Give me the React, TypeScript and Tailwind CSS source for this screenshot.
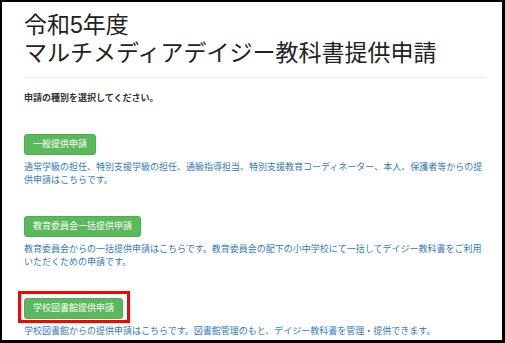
// 申請種別の選択ページ

interface ApplyItem {
  label: string
  description: string
  highlighted?: boolean
}

const items: ApplyItem[] = [
  {
    label: '一般提供申請',
    description:
      '通常学級の担任、特別支援学級の担任、通級指導担当、特別支援教育コーディネーター、本人、保護者等からの提供申請はこちらです。',
  },
  {
    label: '教育委員会一括提供申請',
    description:
      '教育委員会からの一括提供申請はこちらです。教育委員会の配下の小中学校にて一括してデイジー教科書をご利用いただくための申請です。',
  },
  {
    label: '学校図書館提供申請',
    description: '学校図書館からの提供申請はこちらです。図書館管理のもと、デイジー教科書を管理・提供できます。',
    highlighted: true,
  },
]

function ApplyButton({ label, highlighted }: { label: string; highlighted?: boolean }) {
  return (
    <div className="relative self-start">
      <button className="h-[21px] px-[8px] bg-[#5cb85c] border border-[#4cae4c] rounded-[3px] text-white text-[9px] leading-[19px]">
        {label}
      </button>
      {highlighted && (
        <div className="absolute -left-[6px] -top-[3px] -right-[7px] -bottom-[4px] border-[3px] border-[#ff0000] pointer-events-none"></div>
      )}
    </div>
  )
}

export default function App() {
  return (
    <div
      className="w-[505px] h-[343px] bg-black pt-[2px] pl-[2px] pr-[3px] pb-[3px] flex"
      style={{ fontFamily: '"Liberation Sans", "Noto Sans CJK JP", sans-serif' }}
    >
      <div className="flex-1 bg-white pl-[22px] pr-[16px] flex flex-col">
        <h1 className="mt-[9px] text-[23px] leading-[28px] font-normal text-[#222]">
          令和5年度
          <br />
          マルチメディアデイジー教科書提供申請
        </h1>
        <hr className="mt-[10px] border-0 border-t border-[#eeeeee]" />
        <p className="mt-[14px] text-[9px] leading-[13px] font-bold text-[#333]">申請の種別を選択してください。</p>
        <div className="flex flex-col">
          {items.map((item) => (
            <div key={item.label} className="flex flex-col mt-[25px]">
              <ApplyButton label={item.label} highlighted={item.highlighted} />
              <p className="mt-[6px] text-[9px] leading-[13px] text-[#337ab7]">{item.description}</p>
            </div>
          ))}
        </div>
      </div>
    </div>
  )
}
